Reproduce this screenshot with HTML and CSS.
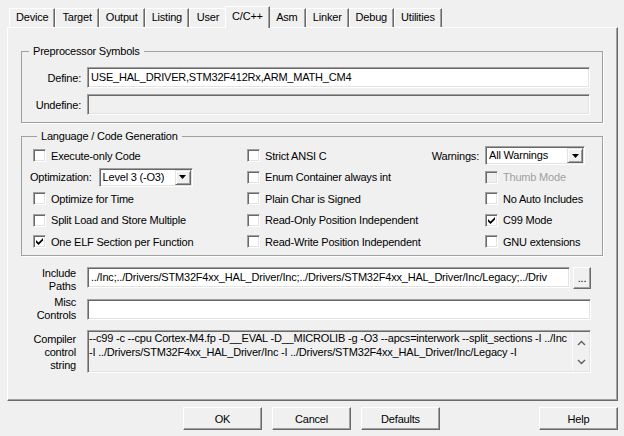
FILE: index.html
```html
<!DOCTYPE html>
<html>
<head>
<meta charset="utf-8">
<link rel="stylesheet" href="styles.css">
</head>
<body>
<div class="dialog">
  <div class="tabs">
    <div class="tab">Device</div>
    <div class="tab">Target</div>
    <div class="tab">Output</div>
    <div class="tab">Listing</div>
    <div class="tab">User</div>
    <div class="tab active">C/C++</div>
    <div class="tab">Asm</div>
    <div class="tab">Linker</div>
    <div class="tab">Debug</div>
    <div class="tab">Utilities</div>
  </div>
  <div class="panel">
    <fieldset class="group pre">
      <legend>Preprocessor Symbols</legend>
      <div class="sym-grid">
        <span class="lbl">Define:</span>
        <div class="field">USE_HAL_DRIVER,STM32F412Rx,ARM_MATH_CM4</div>
        <span class="lbl">Undefine:</span>
        <div class="field off"></div>
      </div>
    </fieldset>

    <fieldset class="group lang">
      <legend>Language / Code Generation</legend>
      <div class="lang-grid">
        <label class="check indent"><span class="box"></span>Execute-only Code</label>
        <label class="check"><span class="box"></span>Strict ANSI C</label>
        <span class="lbl warn-lbl">Warnings:</span>
        <div class="combo warn">
          <span class="val">All Warnings</span>
          <span class="drop"><svg width="7" height="4" viewBox="0 0 7 4"><polygon points="0,0 7,0 3.5,4"/></svg></span>
        </div>

        <div class="opt-row">
          <span class="lbl">Optimization:</span>
          <div class="combo opt">
            <span class="val">Level 3 (-O3)</span>
            <span class="drop"><svg width="7" height="4" viewBox="0 0 7 4"><polygon points="0,0 7,0 3.5,4"/></svg></span>
          </div>
        </div>
        <label class="check"><span class="box"></span>Enum Container always int</label>
        <span></span>
        <label class="check disabled"><span class="box"></span>Thumb Mode</label>

        <label class="check indent"><span class="box"></span>Optimize for Time</label>
        <label class="check"><span class="box"></span>Plain Char is Signed</label>
        <span></span>
        <label class="check"><span class="box"></span>No Auto Includes</label>

        <label class="check indent"><span class="box"></span>Split Load and Store Multiple</label>
        <label class="check"><span class="box"></span>Read-Only Position Independent</label>
        <span></span>
        <label class="check"><span class="box"><svg class="tick" width="9" height="9" viewBox="0 0 9 9"><polygon points="1,3 3.5,5.5 8,1 8,3.5 3.5,8 1,5.5"/></svg></span>C99 Mode</label>

        <label class="check indent"><span class="box"><svg class="tick" width="9" height="9" viewBox="0 0 9 9"><polygon points="1,3 3.5,5.5 8,1 8,3.5 3.5,8 1,5.5"/></svg></span>One ELF Section per Function</label>
        <label class="check"><span class="box"></span>Read-Write Position Independent</label>
        <span></span>
        <label class="check"><span class="box"></span>GNU extensions</label>
      </div>
    </fieldset>

    <div class="paths">
      <span class="plbl">Include<br>Paths</span>
      <div class="inc-row">
        <div class="field inc">../Inc;../Drivers/STM32F4xx_HAL_Driver/Inc;../Drivers/STM32F4xx_HAL_Driver/Inc/Legacy;../Driv</div>
        <button class="btn dots">...</button>
      </div>
      <span class="plbl misc">Misc<br>Controls</span>
      <div class="field"></div>
      <span class="plbl comp">Compiler<br>control<br>string</span>
      <div class="field multi">
        <div class="multi-text">
          <div>--c99 -c --cpu Cortex-M4.fp -D__EVAL -D__MICROLIB -g -O3 --apcs=interwork --split_sections -I ../Inc</div>
          <div>-I ../Drivers/STM32F4xx_HAL_Driver/Inc -I ../Drivers/STM32F4xx_HAL_Driver/Inc/Legacy -I</div>
        </div>
        <div class="vscroll">
          <svg width="9" height="6" viewBox="0 0 9 6"><polyline points="1,5 4.5,1.5 8,5"/></svg>
          <svg width="9" height="6" viewBox="0 0 9 6"><polyline points="1,1 4.5,4.5 8,1"/></svg>
        </div>
      </div>
    </div>
  </div>

  <div class="buttons">
    <button class="btn">OK</button>
    <button class="btn">Cancel</button>
    <button class="btn">Defaults</button>
    <button class="btn help">Help</button>
  </div>
</div>
</body>
</html>
```

FILE: styles.css
```css
* { box-sizing: border-box; }

html, body {
  margin: 0;
  background: #f0f0f0;
}

body {
  font-family: "Liberation Sans", Arial, sans-serif;
  font-size: 11px;
  letter-spacing: -0.2px;
  color: #000;
}

.dialog {
  width: 624px;
  height: 436px;
  padding: 6px 6px 0 7px;
}

/* ---------- tabs ---------- */
.tabs {
  display: flex;
  align-items: flex-end;
  height: 21px;
  padding-left: 2px;
}

.tab {
  height: 19px;
  line-height: 17px;
  padding: 0 6px;
  min-width: 38px;
  text-align: center;
  background: #f0f0f0;
  border-top: 1px solid #fff;
  border-left: 1px solid #fff;
  border-right: 1px solid #696969;
  box-shadow: inset -1px 0 #a0a0a0;
  white-space: nowrap;
}

.tab.active {
  height: 22px;
  line-height: 18px;
  padding: 0 6px;
  margin: 0 -2px -1px;
  position: relative;
  z-index: 2;
}

/* ---------- panel ---------- */
.panel {
  width: 611px;
  height: 374px;
  border-top: 1px solid #fff;
  border-left: 1px solid #fff;
  border-right: 1px solid #696969;
  border-bottom: 1px solid #696969;
  box-shadow: inset -1px -1px #a0a0a0;
  padding: 0 14px 0 13px;
}

.group {
  margin: 0;
  min-width: 0;
  border: 1px solid #a0a0a0;
  box-shadow: 1px 1px 0 #fff;
}

.group legend {
  margin-left: 7px;
  padding: 0 4px;
  line-height: 13px;
  height: 13px;
}

.pre {
  margin-top: 17px;
  padding: 9px 12px 7px 0;
}

.sym-grid {
  display: grid;
  grid-template-columns: 59px 1fr;
  grid-auto-rows: 21px;
  column-gap: 6px;
  row-gap: 6px;
  align-items: center;
}

.lbl {
  text-align: right;
  white-space: nowrap;
}

.field {
  height: 21px;
  border: 1px solid;
  border-color: #a0a0a0 #fff #fff #a0a0a0;
  box-shadow: inset 1px 1px #696969, inset -1px -1px #e3e3e3;
  background: #fff;
  padding: 0 2px 0 3px;
  line-height: 19px;
  white-space: nowrap;
  overflow: hidden;
}

.field.off {
  background: #f0f0f0;
}

/* ---------- language group ---------- */
.lang {
  margin-top: 7px;
  padding: 2px 0 2px 8px;
}

.lang-grid {
  display: grid;
  grid-template-columns: 217px 184px 54px 1fr;
  grid-auto-rows: 21.5px;
  align-items: center;
}

.check {
  display: flex;
  align-items: center;
  gap: 5px;
  white-space: nowrap;
}

.check.indent {
  margin-left: 3px;
}

.box {
  width: 13px;
  height: 13px;
  flex: none;
  background: #fff;
  border: 1px solid;
  border-color: #a0a0a0 #fff #fff #a0a0a0;
  box-shadow: inset 1px 1px #696969, inset -1px -1px #e3e3e3;
  display: flex;
  align-items: center;
  justify-content: center;
}

.tick {
  display: block;
  fill: #000;
}

.check.disabled {
  color: #a0a0a0;
}

.check.disabled .box {
  background: #f0f0f0;
}

.warn-lbl {
  padding-right: 6px;
}

.opt-row {
  display: flex;
  align-items: center;
  gap: 7px;
}

.combo {
  display: flex;
  height: 19px;
  padding: 1px;
  border: 1px solid;
  border-color: #a0a0a0 #fff #fff #a0a0a0;
  box-shadow: inset 1px 1px #696969, inset -1px -1px #e3e3e3;
  background: #fff;
}

.combo.opt { width: 94px; }
.combo.warn { width: 100px; }

.combo .val {
  flex: 1;
  padding-left: 2px;
  line-height: 15px;
  white-space: nowrap;
}

.combo .drop {
  width: 16px;
  background: #f0f0f0;
  border: 1px solid;
  border-color: #e3e3e3 #696969 #696969 #e3e3e3;
  box-shadow: inset 1px 1px #fff, inset -1px -1px #a0a0a0;
  display: flex;
  align-items: center;
  justify-content: center;
}

.combo .drop svg {
  display: block;
  fill: #000;
}

/* ---------- include / misc / compiler ---------- */
.paths {
  margin-top: 11px;
  display: grid;
  grid-template-columns: 55px 504px;
  grid-template-rows: 22px 21px 43px;
  column-gap: 11px;
  row-gap: 10px;
}

.plbl {
  text-align: right;
  line-height: 13px;
  white-space: nowrap;
}

.plbl.misc { margin-top: -3px; }
.plbl.comp { margin-top: 3px; }

.inc-row {
  display: flex;
  gap: 3px;
}

.field.inc {
  flex: 1;
  min-width: 0;
}

.btn {
  font: inherit;
  letter-spacing: inherit;
  color: #000;
  background: #f0f0f0;
  border: 1px solid;
  border-color: #fff #696969 #696969 #fff;
  box-shadow: inset -1px -1px #a0a0a0;
  padding: 0;
  margin: 0;
  border-radius: 0;
}

.btn.dots {
  width: 18px;
  height: 22px;
  line-height: 20px;
}

.field.multi {
  height: 43px;
  background: #f0f0f0;
  display: flex;
  padding: 0 1px 0 1px;
  line-height: 14px;
}

.multi-text {
  flex: 1;
  min-width: 0;
  overflow: hidden;
  white-space: nowrap;
}

.vscroll {
  width: 17px;
  margin: 1px 0;
  border-left: 1px solid #fbfbfb;
  display: flex;
  flex-direction: column;
  align-items: center;
  justify-content: space-between;
  padding: 8px 0 6px;
}

.vscroll svg {
  display: block;
  fill: none;
  stroke: #606060;
  stroke-width: 1.4;
}

/* ---------- bottom buttons ---------- */
.buttons {
  display: flex;
  gap: 10px;
  padding-left: 176px;
  margin-top: 6px;
}

.buttons .btn {
  width: 79px;
  height: 23px;
}

.buttons .help {
  margin-left: auto;
}
```
